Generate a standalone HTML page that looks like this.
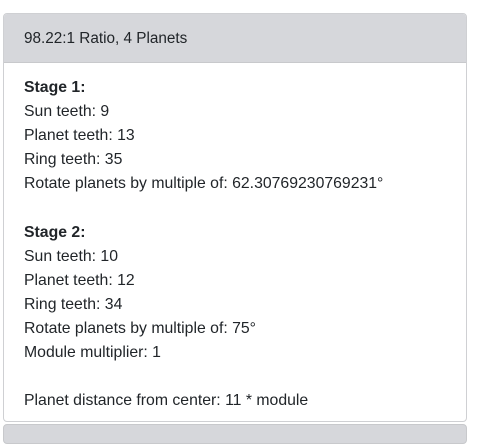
<!DOCTYPE html>
<html><head><style>
body{margin:0;background:#fff;font-family:"Liberation Sans",sans-serif;color:#212529;font-size:15.8px;}
.card{position:absolute;left:3px;top:13px;width:464px;height:409px;border:1px solid #cfd0d3;border-radius:4px;overflow:hidden;box-sizing:border-box;}
.hd{height:49px;background:#d6d7db;border-bottom:1px solid #c8c9cc;box-sizing:border-box;padding-left:20px;line-height:50px;font-size:15.3px;}
.bd{padding:13px 0 0 20px;line-height:24.1px;}
.card2{position:absolute;left:3px;top:424px;width:464px;height:20px;background:#d6d7db;border:1px solid #c8c9cc;border-radius:4px;box-sizing:border-box;}
b{font-weight:bold;}
</style></head><body>
<div class="card">
<div class="hd">98.22:1 Ratio, 4 Planets</div>
<div class="bd">
<b>Stage 1:</b><br>Sun teeth: 9<br>Planet teeth: 13<br>Ring teeth: 35<br>Rotate planets by multiple of: 62.30769230769231°<br><br>
<b>Stage 2:</b><br>Sun teeth: 10<br>Planet teeth: 12<br>Ring teeth: 34<br>Rotate planets by multiple of: 75°<br>Module multiplier: 1<br><br>
Planet distance from center: 11 * module
</div>
</div>
<div class="card2"></div>
</body></html>
